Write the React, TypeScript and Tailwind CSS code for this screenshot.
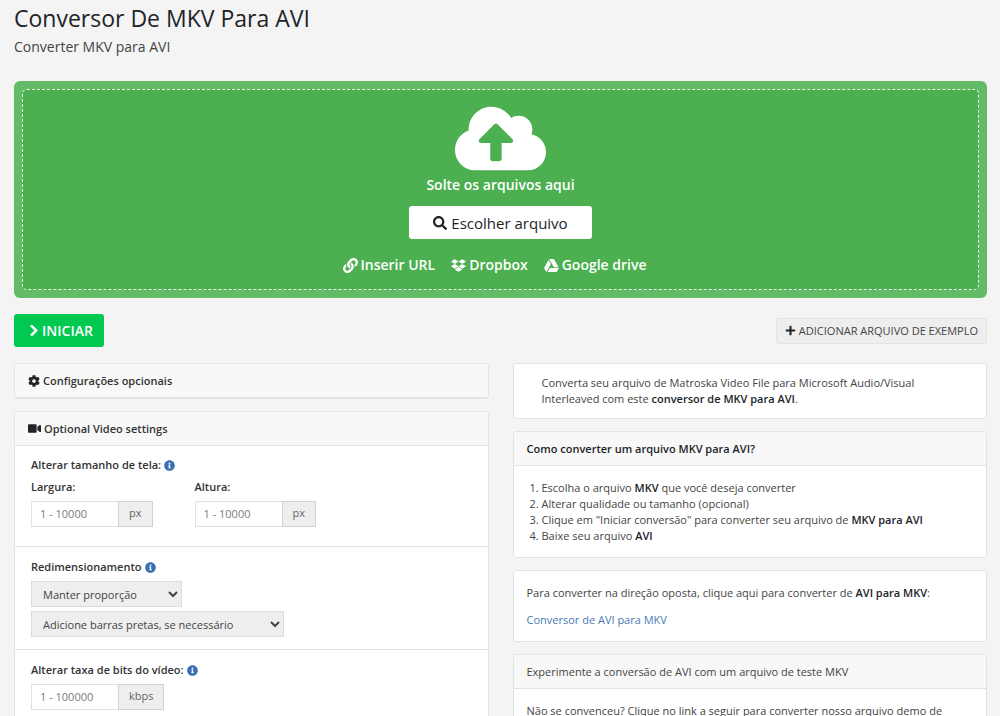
import type { ReactNode } from "react";
import { clsx } from "clsx";
import {
  FaChevronRight,
  FaCloudUploadAlt,
  FaCog,
  FaDropbox,
  FaGoogleDrive,
  FaInfoCircle,
  FaLink,
  FaPlus,
  FaSearch,
  FaVideo,
} from "react-icons/fa";

const sources = [
  { label: "Inserir URL", icon: FaLink },
  { label: "Dropbox", icon: FaDropbox },
  { label: "Google drive", icon: FaGoogleDrive },
];

const selectClasses = "block h-[26px] border border-[#dcdcdc] bg-[#eeeeee] pl-[7px] text-[11px] text-[#444]";
const labelClasses = "flex items-center gap-[3px] font-semibold text-[#333]";

function Panel({ title, children }: { title?: ReactNode; children?: ReactNode }) {
  return (
    <section className="rounded-[3px] border border-[#e3e3e3] bg-white">
      {title && (
        <h2 className="flex h-[34px] items-center border-b border-[#e3e3e3] bg-[#f8f8f8] px-[13px]">{title}</h2>
      )}
      {children}
    </section>
  );
}

function Info() {
  return <FaInfoCircle className="size-[11px] text-[#3a6fb5]" />;
}

function Strong({ children }: { children: ReactNode }) {
  return <b className="font-semibold text-[#212529]">{children}</b>;
}

function NumberField({ id, placeholder, unit }: { id: string; placeholder: string; unit: string }) {
  return (
    <div className="flex h-[26px]">
      <input
        id={id}
        type="text"
        placeholder={placeholder}
        className="w-[88px] border border-[#dde3e9] bg-white px-2 text-[11px] placeholder:text-[#7b7b7b]"
      />
      <span className="-ml-px border border-[#d2d2d2] bg-[#eeeeee] px-2.5 leading-[22px] text-[#666]">{unit}</span>
    </div>
  );
}

export default function App() {
  return (
    <div className="min-h-screen bg-[#f4f4f4] pt-[3px] pr-[13px] pb-6 pl-3.5 font-['Open_Sans',sans-serif] text-[11px] leading-4 text-[#444]">
      <h1 className="text-[23px] leading-[30px] font-medium text-[#212529]">Conversor De MKV Para AVI</h1>
      <p className="mt-[5px] text-[14px] leading-[18px]">Converter MKV para AVI</p>

      {/* Drop zone */}
      <div className="mt-[25px] rounded-md bg-[#64bb67] p-2">
        <div className="flex flex-col items-center rounded-[5px] border border-dashed border-white/90 bg-[#4caf50] pt-3 pb-3.5 text-[14px] leading-5 font-semibold text-white">
          <FaCloudUploadAlt className="h-[73px] w-[91px]" />
          <p>Solte os arquivos aqui</p>
          <button className="mt-[11px] flex h-[33px] items-center gap-1 rounded-[3px] bg-white px-6 text-[15px] font-medium text-[#212529]">
            <FaSearch className="size-[14px]" />
            Escolher arquivo
          </button>
          <div className="mt-4 flex gap-4 pr-3">
            {sources.map(({ label, icon: Icon }) => (
              <a key={label} href="#" className="flex items-center gap-[3px]">
                <Icon className="size-[15px]" />
                {label}
              </a>
            ))}
          </div>
        </div>
      </div>

      {/* Actions */}
      <div className="mt-4 flex items-center justify-between">
        <button className="flex h-[33px] items-center gap-[3px] rounded-[3px] bg-[#00c851] pr-[11px] pl-[15px] text-[14px] font-semibold text-white">
          <FaChevronRight className="h-[13px] w-[10px] stroke-[30px]" />
          INICIAR
        </button>
        <button className="flex h-[26px] items-center gap-[3px] rounded-[3px] border border-[#e3e3e3] bg-[#eeeeee] px-2 text-[#444]">
          <FaPlus className="size-[11px] text-[#212529]" />
          ADICIONAR ARQUIVO DE EXEMPLO
        </button>
      </div>

      <div className="mt-4 grid grid-cols-2 items-start gap-6">
        {/* Settings */}
        <div className="grid gap-3">
          <Panel
            title={
              <span className={labelClasses}>
                <FaCog className="size-[12px] text-[#212529]" />
                Configurações opcionais
              </span>
            }
          />
          <Panel
            title={
              <span className={labelClasses}>
                <FaVideo className="size-[13px] text-[#212529]" />
                Optional Video settings
              </span>
            }
          >
            <div className="border-b border-[#e3e3e3] px-4 pt-[11px] pb-[19px]">
              <p className={labelClasses}>
                Alterar tamanho de tela: <Info />
              </p>
              <div className="mt-1.5 flex gap-[42px]">
                <div>
                  <label htmlFor="width" className={clsx(labelClasses, "mb-1.5")}>Largura:</label>
                  <NumberField id="width" placeholder="1 - 10000" unit="px" />
                </div>
                <div>
                  <label htmlFor="height" className={clsx(labelClasses, "mb-1.5")}>Altura:</label>
                  <NumberField id="height" placeholder="1 - 10000" unit="px" />
                </div>
              </div>
            </div>
            <div className="border-b border-[#e3e3e3] px-4 py-3">
              <label htmlFor="resize" className={labelClasses}>
                Redimensionamento <Info />
              </label>
              <select id="resize" className={clsx(selectClasses, "mt-1.5 w-[151px]")}>
                <option>Manter proporção</option>
              </select>
              <select aria-label="Barras pretas" className={clsx(selectClasses, "mt-1 w-[253px]")}>
                <option>Adicione barras pretas, se necessário</option>
              </select>
            </div>
            <div className="px-4 pt-3 pb-5">
              <label htmlFor="bitrate" className={clsx(labelClasses, "mb-1.5")}>
                Alterar taxa de bits do vídeo: <Info />
              </label>
              <NumberField id="bitrate" placeholder="1 - 100000" unit="kbps" />
            </div>
          </Panel>
        </div>

        {/* Help texts */}
        <div className="grid gap-3">
          <Panel>
            <p className="px-7 py-[11px]">
              Converta seu arquivo de Matroska Video File para Microsoft Audio/Visual Interleaved com este{" "}
              <Strong>conversor de MKV para AVI</Strong>.
            </p>
          </Panel>
          <Panel title={<Strong>Como converter um arquivo MKV para AVI?</Strong>}>
            <ol className="list-decimal pt-3.5 pr-4 pb-[13px] pl-7">
              <li>
                Escolha o arquivo <Strong>MKV</Strong> que você deseja converter
              </li>
              <li>Alterar qualidade ou tamanho (opcional)</li>
              <li>
                Clique em "Iniciar conversão" para converter seu arquivo de <Strong>MKV para AVI</Strong>
              </li>
              <li>
                Baixe seu arquivo <Strong>AVI</Strong>
              </li>
            </ol>
          </Panel>
          <Panel>
            <div className="px-[13px] pt-3.5 pb-[13px]">
              <p>
                Para converter na direção oposta, clique aqui para converter de <Strong>AVI para MKV</Strong>:
              </p>
              <a href="#" className="mt-[11px] block text-[#4a7ab5]">Conversor de AVI para MKV</a>
            </div>
          </Panel>
          <Panel title="Experimente a conversão de AVI com um arquivo de teste MKV">
            <p className="px-[13px] py-3.5">
              Não se convenceu? Clique no link a seguir para converter nosso arquivo demo de
            </p>
          </Panel>
        </div>
      </div>
    </div>
  );
}
